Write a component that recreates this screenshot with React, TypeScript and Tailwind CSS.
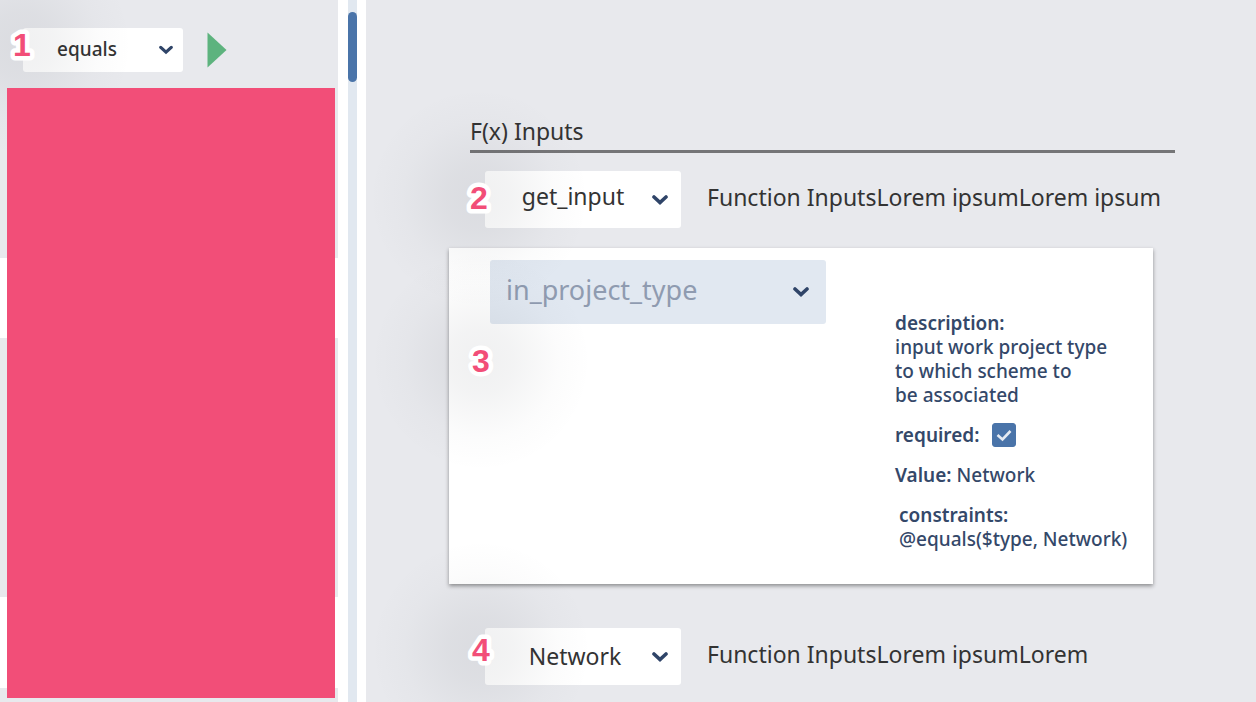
import React, { useState } from 'react';
import clsx from 'clsx';

interface SelectProps {
  label: string;
  options: string[];
  className: string;
  chevronClassName: string;
}

function Chevron({ className }: { className: string }) {
  return (
    <svg
      viewBox="0 0 16 11"
      fill="none"
      aria-hidden="true"
      className={clsx('pointer-events-none absolute top-1/2 -translate-y-1/2', className)}
    >
      <path d="M2 2.5 L8 8 L14 2.5" stroke="#2f4468" strokeWidth="3.6" strokeLinecap="round" />
    </svg>
  );
}

function Select({ label, options, className, chevronClassName }: SelectProps) {
  const [value, setValue] = useState(options[0]);

  return (
    <div className="relative shrink-0 self-start">
      <select
        aria-label={label}
        value={value}
        onChange={(e) => setValue(e.target.value)}
        className={clsx('block appearance-none rounded-[3px]', className)}
      >
        {options.map((option) => (
          <option key={option}>{option}</option>
        ))}
      </select>
      <Chevron className={chevronClassName} />
    </div>
  );
}

// numbered callout with a soft round shadow, sits over the control it points at
function Marker({ value, className }: { value: number; className: string }) {
  return (
    <span
      className={clsx(
        'pointer-events-none absolute z-10 flex size-[220px] items-center justify-center bg-[radial-gradient(closest-side,rgba(40,45,55,0.07),rgba(40,45,55,0.055)_30%,rgba(40,45,55,0.015)_70%,transparent)]',
        className,
      )}
    >
      <svg viewBox="0 0 40 40" className="size-10">
        <text
          x="20"
          y="31"
          textAnchor="middle"
          fill="#f24e78"
          stroke="#fff"
          strokeWidth="9"
          strokeLinejoin="round"
          className="font-['Liberation_Sans',sans-serif] text-[32px] font-bold [paint-order:stroke]"
        >
          {value}
        </text>
      </svg>
    </span>
  );
}

function Sidebar() {
  return (
    <aside className="relative flex w-[338px] shrink-0 flex-col bg-[#e8e9ed]">
      <div className="h-[258px]">
        <div className="relative flex items-center gap-6 pt-7 pl-[23px]">
          <Marker value={1} className="-top-[65px] -left-[88px]" />
          <Select
            label="Operator"
            options={['equals', 'contains']}
            className="h-11 w-40 bg-white pr-8 pb-0.5 text-[19px] font-medium text-[#333] [text-align-last:center]"
            chevronClassName="right-2.5 w-3.5"
          />
          <button type="button" aria-label="Run">
            <svg viewBox="0 0 20 36" className="h-9 w-5" aria-hidden="true">
              <path d="M0.5 0.5 L19.5 18 L0.5 35.5 Z" fill="#5db37e" />
            </svg>
          </button>
        </div>
      </div>
      <div className="h-20 bg-white" />
      <div className="h-[259px]" />
      <div className="h-[91px] bg-white" />
      <div className="absolute top-[88px] right-[3px] bottom-1 left-[7px] z-20 bg-[#f24e78]" />
    </aside>
  );
}

function InputCard() {
  return (
    <section className="relative mt-5 flex justify-between bg-white pt-3 pr-7 pb-[33px] pl-[41px] shadow-[0_2px_4px_rgba(0,0,0,0.4)]">
      <Marker value={3} className="top-[3px] -left-[78px]" />
      <Select
        label="Project type"
        options={['in_project_type']}
        className="h-16 w-[336px] bg-[#e1e8f1] pr-10 pb-1 pl-4 text-[27px] text-[#8f9bb0]"
        chevronClassName="right-[17px] w-4"
      />
      <div className="flex w-[230px] shrink-0 flex-col gap-4 pt-[51px] text-[19px] leading-6 font-medium text-[#344869]">
        <p>
          <span className="font-semibold">description:</span>
          <br />
          input work project type
          <br />
          to which scheme to
          <br />
          be associated
        </p>
        <label className="flex h-6 items-center gap-3 font-semibold">
          required:
          <span className="relative size-6">
            <input
              type="checkbox"
              defaultChecked
              className="peer block size-6 appearance-none rounded-[3px] border border-[#4a74a9] checked:bg-[#4a74a9]"
            />
            <svg
              viewBox="0 0 24 24"
              fill="none"
              aria-hidden="true"
              className="pointer-events-none absolute inset-0 hidden size-6 peer-checked:block"
            >
              <path d="M5.5 12 L10.5 16.5 L18.5 8" stroke="#e6ebf2" strokeWidth="2.6" />
            </svg>
          </span>
        </label>
        <p>
          <span className="font-semibold">Value:</span> Network
        </p>
        <p className="pl-1 whitespace-nowrap">
          <span className="font-semibold">constraints:</span>
          <br />
          @equals($type, Network)
        </p>
      </div>
    </section>
  );
}

export default function App() {
  return (
    <div className="flex min-h-screen overflow-hidden bg-white font-['Noto_Sans',sans-serif]">
      <Sidebar />
      <div className="ml-2.5 w-[9px] shrink-0 bg-[#e1e8f0] pt-3">
        <div className="h-[70px] rounded-full bg-[#4a74a9]" />
      </div>
      <main className="ml-[9px] min-w-0 flex-1 bg-[#e8e9ed] pt-[116px] pr-[103px] pl-[83px] text-[23px] text-[#333]">
        <h1 className="-mr-[22px] ml-[21px] border-b-[3px] border-[#757577] pb-1 leading-[30px]">
          F(x) Inputs
        </h1>

        <div className="relative mt-[18px] flex items-center gap-[26px] pl-9">
          <Marker value={2} className="-top-[83px] -left-20" />
          <Select
            label="Function"
            options={['get_input', 'get_property']}
            className="h-[57px] w-[196px] bg-white pr-5 pb-1.5 [text-align-last:center]"
            chevronClassName="right-[13px] w-4"
          />
          <p className="pb-1 whitespace-nowrap">Function InputsLorem ipsumLorem ipsum</p>
        </div>

        <InputCard />

        <div className="relative mt-11 flex items-center gap-[26px] pl-9">
          <Marker value={4} className="-top-[88px] -left-[78px]" />
          <Select
            label="Value"
            options={['Network', 'Service']}
            className="h-[57px] w-[196px] bg-white pr-4 [text-align-last:center]"
            chevronClassName="right-[13px] w-4"
          />
          <p className="pb-1 whitespace-nowrap">Function InputsLorem ipsumLorem</p>
        </div>
      </main>
    </div>
  );
}
